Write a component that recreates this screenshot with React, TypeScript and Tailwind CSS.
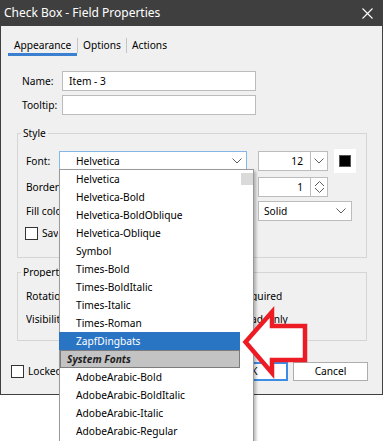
import React from "react";

const Chevron = () => (
  <svg width="10" height="6" viewBox="0 0 10 6" className="shrink-0">
    <path d="M0.5 0.5 L5 5 L9.5 0.5" fill="none" stroke="#5f5f5f" strokeWidth="1" />
  </svg>
);

const Check = () => <div className="w-[13px] h-[13px] bg-white border border-[#333] shrink-0" />;

const items1 = [
  "Helvetica",
  "Helvetica-Bold",
  "Helvetica-BoldOblique",
  "Helvetica-Oblique",
  "Symbol",
  "Times-Bold",
  "Times-BoldItalic",
  "Times-Italic",
  "Times-Roman",
];
const items2 = ["AdobeArabic-Bold", "AdobeArabic-BoldItalic", "AdobeArabic-Italic", "AdobeArabic-Regular"];

export default function App() {
  return (
    <div
      className="relative w-[383px] h-[441px] bg-white overflow-hidden text-[10.2px] text-black leading-none"
      style={{ fontFamily: '"Noto Sans", "Liberation Sans", sans-serif' }}
    >
      <div className="w-[383px] h-[395px] flex flex-col bg-[#f0f0f0] border-x border-b border-[#3f3f3f]">
        {/* title bar */}
        <div className="h-[26px] -mx-px bg-[#3f3f3f] flex items-center justify-between pl-[4px] pr-[10px] shrink-0">
          <span className="text-white text-[12px]">Check Box - Field Properties</span>
          <svg width="11" height="11" viewBox="0 0 11 11">
            <path d="M0.5 0.5 L10.5 10.5 M10.5 0.5 L0.5 10.5" stroke="#fff" strokeWidth="1.1" />
          </svg>
        </div>

        {/* tabs */}
        <div className="mt-[10px] h-[20px] flex items-start pl-[7px]">
          <div className="h-[20px] w-[69px] pl-[6px] pt-[4px] border-b-[3px] border-[#3b7fd1]">Appearance</div>
          <div className="w-px h-[15px] mt-[2px] bg-[#c4c4c4]" />
          <div className="h-[20px] w-[48px] pl-[5px] pt-[4px]">Options</div>
          <div className="w-px h-[15px] mt-[2px] bg-[#c4c4c4]" />
          <div className="h-[20px] pl-[5px] pt-[4px]">Actions</div>
        </div>

        {/* name / tooltip */}
        <div className="mt-[15px] flex items-center pl-[21px] h-[20px]">
          <div className="w-[40px]">Name:</div>
          <div className="w-[194px] h-[20px] bg-white border border-[#bcbcbc] flex items-center pl-[6px]">Item - 3</div>
        </div>
        <div className="mt-[4px] flex items-center pl-[21px] h-[20px]">
          <div className="w-[40px]">Tooltip:</div>
          <div className="w-[194px] h-[20px] bg-white border border-[#bcbcbc]" />
        </div>

        {/* Style group */}
        <div className="relative mt-[18px] ml-[16px] w-[350px] h-[125px] border border-[#d5d5d5] flex flex-col pl-[8px] pt-[15px]">
          <span className="absolute left-[3px] -top-[6px] px-[2px] bg-[#f0f0f0]">Style</span>
          <div className="flex items-center h-[24px]">
            <div className="w-[33px]">Font:</div>
            <div className="w-[188px] h-[20px] bg-white border border-[#86b6e6] flex items-center justify-between pl-[16px] pr-[4px]">
              <span>Helvetica</span>
              <Chevron />
            </div>
            <div className="ml-[11px] w-[70px] h-[20px] bg-white border border-[#bcbcbc] flex">
              <div className="flex-1 flex items-center justify-end pr-[7px]">12</div>
              <div className="w-[17px] border-l border-[#bcbcbc] flex items-center justify-center">
                <Chevron />
              </div>
            </div>
            <div className="ml-[6px] w-[22px] h-[24px] bg-white flex items-center justify-center">
              <div className="w-[12px] h-[12px] bg-black border border-[#555]" />
            </div>
          </div>
          <div className="mt-[4px] flex items-center h-[20px]">
            <div className="w-[33px] whitespace-nowrap overflow-hidden">Border width:</div>
            <div className="w-[188px]" />
            <div className="ml-[11px] w-[70px] h-[20px] bg-white border border-[#bcbcbc] flex">
              <div className="flex-1 flex items-center justify-end pr-[7px]">1</div>
              <div className="w-[17px] border-l border-[#bcbcbc] flex items-center justify-center">
                <svg width="11" height="14" viewBox="0 0 11 14">
                  <path d="M1 6 L5.5 1.5 L10 6 M1 8 L5.5 12.5 L10 8" fill="none" stroke="#5f5f5f" strokeWidth="1" />
                </svg>
              </div>
            </div>
          </div>
          <div className="mt-[4px] flex items-center h-[20px]">
            <div className="w-[33px] whitespace-nowrap overflow-hidden">Fill color:</div>
            <div className="w-[188px]" />
            <div className="ml-[11px] w-[94px] h-[20px] bg-white border border-[#bcbcbc] flex items-center justify-between pl-[5px] pr-[5px]">
              <span>Solid</span>
              <Chevron />
            </div>
          </div>
          <div className="mt-[5px] flex items-center h-[14px] -ml-px">
            <Check />
            <span className="ml-[4px] w-[16px] overflow-hidden whitespace-nowrap">Save as default</span>
          </div>
        </div>

        {/* Properties group */}
        <div className="relative mt-[14px] ml-[16px] w-[350px] h-[69px] border border-[#d5d5d5] flex flex-col pl-[8px] pt-[13px]">
          <span className="absolute left-[3px] -top-[6px] px-[2px] bg-[#f0f0f0] w-[40px] overflow-hidden whitespace-nowrap">
            Properties
          </span>
          <div className="flex items-center h-[20px]">
            <div className="w-[33px] overflow-hidden whitespace-nowrap">Rotation:</div>
            <div className="ml-[195px] overflow-hidden whitespace-nowrap">
              <span className="-ml-[15px]">Required</span>
            </div>
          </div>
          <div className="mt-[3px] flex items-center h-[20px]">
            <div className="w-[33px] overflow-hidden whitespace-nowrap">Visibility:</div>
            <div className="ml-[195px] overflow-hidden whitespace-nowrap">
              <span className="-ml-[15px]">Read Only</span>
            </div>
          </div>
        </div>

        {/* bottom row */}
        <div className="mt-[21px] h-[19px] flex items-center pl-[10px]">
          <Check />
          <span className="ml-[4px] w-[31px] overflow-hidden whitespace-nowrap">Locked</span>
          <div className="ml-auto mr-[14px] flex gap-[5px]">
            <div className="w-[75px] h-[19px] bg-white border-2 border-[#3c8ee4] flex items-center justify-center">OK</div>
            <div className="w-[75px] h-[19px] bg-white border border-[#adadad] flex items-center justify-center">Cancel</div>
          </div>
        </div>
      </div>

      {/* dropdown list overlay */}
      <div className="absolute left-[59px] top-[169px] w-[195px] h-[290px] bg-white border border-[#9a9a9a] shadow-[2px_2px_3px_rgba(0,0,0,0.28)] flex">
        <div className="w-[180px] flex flex-col">
          {items1.map((t) => (
            <div key={t} className="h-[18px] flex items-center pl-[16px]">
              {t}
            </div>
          ))}
          <div className="h-[18px] -ml-px w-[181px] flex items-center pl-[17px] bg-[#2a75c3] text-white">ZapfDingbats</div>
          <div className="h-[18px] flex items-center pl-[6px] bg-[#c3c3c3] border border-[#7c7c7c] font-bold italic text-[#1e1e1e]">
            System Fonts
          </div>
          {items2.map((t) => (
            <div key={t} className="h-[18px] flex items-center pl-[16px]">
              {t}
            </div>
          ))}
        </div>
        <div className="w-[13px] flex flex-col items-center">
          <div className="mt-[3px] w-[12px] h-[12px] bg-[#dadada]" />
        </div>
      </div>

      {/* red arrow */}
      <svg className="absolute left-0 top-0" width="383" height="441" viewBox="0 0 383 441">
        <polygon
          points="245.5,342 272,312 272,326 305,326 305,360 272,360 272,373"
          fill="#fff"
          stroke="#ed1c24"
          strokeWidth="4.5"
          strokeLinejoin="miter"
        />
      </svg>
    </div>
  );
}
